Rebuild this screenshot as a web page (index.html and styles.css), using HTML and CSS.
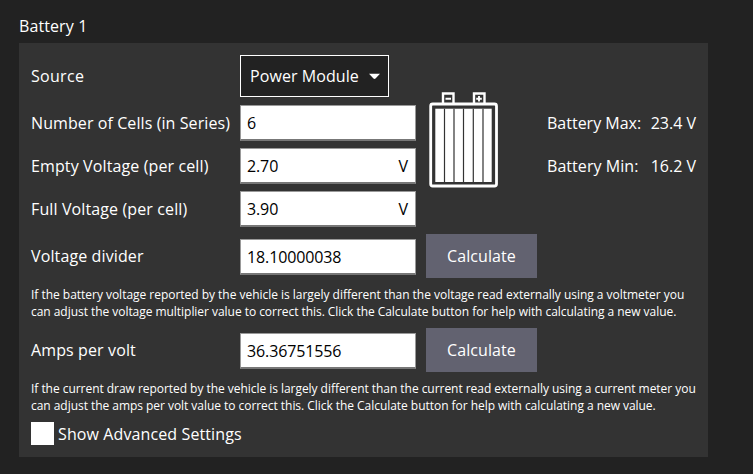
FILE: index.html
```html
<!DOCTYPE html>
<html lang="en">
<head>
<meta charset="utf-8">
<title>Battery 1</title>
<link rel="stylesheet" href="styles.css">
</head>
<body>
<h1 class="title">Battery 1</h1>
<main class="panel">
  <div class="row row-source">
    <span class="label t-source">Source</span>
    <div class="select"><span class="t-select">Power Module</span>
      <svg class="arrow" width="11" height="7" viewBox="0 0 11 7"><path d="M0 .8H11L6.5 5.6Q5.500 6.500 4.500 5.600Z" fill="#fff"/></svg>
    </div>
  </div>
  <div class="cells">
    <div class="fields">
      <div class="row"><span class="label t-number">Number of Cells (in Series)</span><div class="field"><span>6</span></div></div>
      <div class="row"><span class="label">Empty Voltage (per cell)</span><div class="field"><span>2.70</span><span>V</span></div></div>
      <div class="row"><span class="label">Full Voltage (per cell)</span><div class="field"><span>3.90</span><span>V</span></div></div>
    </div>
    <svg class="battery" width="70" height="97" viewBox="428 92 70 97">
      <g fill="none" stroke="#fff">
        <rect x="430.700" y="104" width="65.800" height="82" rx="2" stroke-width="2.800"/>
        <path d="M443 103V93.500H453.500V103M474 103V93.500H484.500V103" stroke-width="2.400"/>
        <path d="M445.500 98.800H451M476.200 98.800H481.800M479 96V101.600" stroke-width="1.900"/>
      </g>
      <rect x="435.300" y="108.700" width="56.400" height="73.300" fill="#fff"/>
      <path d="M444.500 108.700V182M454 108.700V182M463.500 108.700V182M473.300 108.700V182M483 108.700V182" stroke="#333" stroke-width="1.200"/>
    </svg>
    <div class="stats">
      <div class="stat"><span>Battery Max:</span><span>23.4 V</span></div>
      <div class="stat"><span class="t-min">Battery Min:</span><span>16.2 V</span></div>
    </div>
  </div>
  <div class="row row-calc">
    <span class="label">Voltage divider</span>
    <div class="field"><span>18.10000038</span></div>
    <button class="button">Calculate</button>
  </div>
  <p class="note"><span class="n1">If the battery voltage reported by the vehicle is largely different than the voltage read externally using a voltmeter you</span><br><span>can adjust the voltage multiplier value to correct this. Click the Calculate button for help with calculating a new value.</span></p>
  <div class="row row-calc">
    <span class="label">Amps per volt</span>
    <div class="field"><span>36.36751556</span></div>
    <button class="button">Calculate</button>
  </div>
  <p class="note"><span>If the current draw reported by the vehicle is largely different than the current read externally using a current meter you</span><br><span>can adjust the amps per volt value to correct this. Click the Calculate button for help with calculating a new value.</span></p>
  <div class="check"><span class="box"></span><span class="t-check">Show Advanced Settings</span></div>
</main>
</body>
</html>
```
FILE: styles.css
```css
* { box-sizing: border-box; }
body {
  margin: 0;
  padding: 15px 0 0 19px;
  background: #222;
  color: #fff;
  font: 16px/22px "Open Sans", sans-serif;
  white-space: nowrap;
}
.title { margin: 0 0 6px; font-size: 16px; font-weight: 400; letter-spacing: .1px; }
.panel {
  display: flex;
  flex-direction: column;
  width: 689px;
  height: 414px;
  padding: 12px;
  gap: 8px;
  background: #333;
}
.row { display: flex; align-items: center; height: 36px; }
.row-source { height: 42px; }
.row-calc { height: 44px; }
.label { width: 209px; flex: none; letter-spacing: .12px; }
.t-source { letter-spacing: .3px; }
.t-number { letter-spacing: .09px; }
.t-select { letter-spacing: .08px; }
.t-check { letter-spacing: .11px; }
.t-min { letter-spacing: .06px; }
.select {
  display: flex;
  align-items: center;
  justify-content: space-between;
  width: 149px;
  height: 42px;
  padding: 0 8px 0 9px;
  border: 1px solid #fff;
  background: #222;
}
.field {
  display: flex;
  align-items: center;
  justify-content: space-between;
  width: 176px;
  height: 36px;
  padding: 0 7px 0 6px;
  border: 1px solid #999;
  border-bottom: 2px solid #777;
  background: #fff;
  color: #000;
  letter-spacing: -.12px;
}
.row-calc .field { margin-top: 2px; }
.cells { display: flex; height: 121px; }
.fields { display: flex; flex-direction: column; gap: 7px; }
.battery { margin: -13px 0 0 12px; }
.stats { display: flex; flex-direction: column; gap: 7px; margin-left: 49px; width: 149px; }
.stat { display: flex; align-items: center; justify-content: space-between; height: 36px; }
.button {
  width: 111px;
  height: 44px;
  margin-left: 10px;
  padding: 0;
  border: 0;
  background: #626270;
  color: #fff;
  font: inherit;
  letter-spacing: .08px;
}
.note { margin: 0; height: 34px; font-size: 12px; line-height: 17px; letter-spacing: -.042px; }
.n1 { letter-spacing: -.025px; }
.check { display: flex; align-items: center; gap: 4px; height: 23px; }
.box { width: 23px; height: 23px; background: #fff; }
```
